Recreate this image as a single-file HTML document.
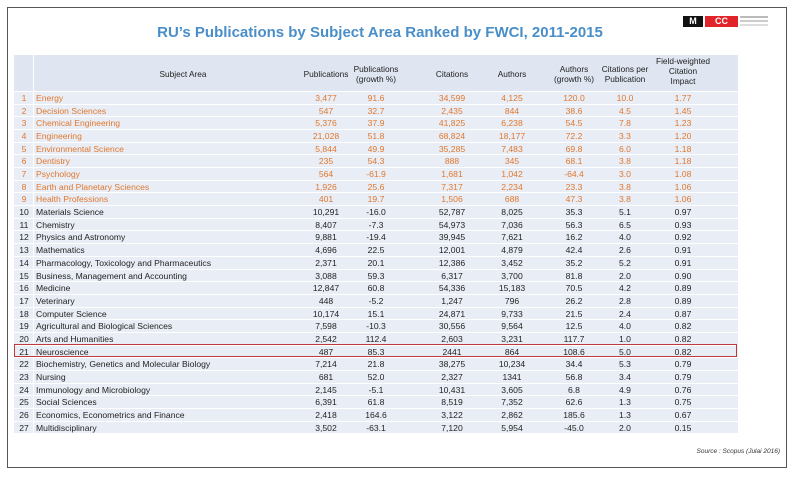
<!DOCTYPE html>
<html><head><meta charset="utf-8"><style>
body{margin:0;width:797px;height:479px;background:#fff;position:relative;overflow:hidden;font-family:"Liberation Sans",sans-serif}
#frame{position:absolute;left:7px;top:7px;width:780px;height:461px;border:1.5px solid #555;box-sizing:border-box}
#title{position:absolute;left:0;width:760px;top:24px;text-align:center;color:#4a8ec8;font-weight:bold;font-size:15px}
#tbl{position:absolute;left:14px;top:55px;width:724px;height:378px;background:#e9eef6}
.hdr{position:absolute;left:14px;top:55px;width:724px;height:36px;background:#dfe6f1}
.c{position:absolute;font-size:8.6px;white-space:nowrap;text-align:center;width:80px;line-height:12px}
.h{color:#222;font-size:8.3px;line-height:10px}
.sep{position:absolute;left:14px;width:724px;height:1px;background:#fff}
.vs{position:absolute;top:55px;width:1px;height:378px;background:#fff}
</style></head><body>
<div id="frame"></div>
<div id="title">RU’s Publications by Subject Area Ranked by FWCI, 2011-2015</div>
<div style="position:absolute;left:683px;top:16px;width:20px;height:11px;background:#111;color:#fff;font-size:9px;font-weight:bold;text-align:center;line-height:11px">M</div>
<div style="position:absolute;left:705px;top:16px;width:33px;height:11px;background:#e0242a;color:#fff;font-size:9px;font-weight:bold;text-align:center;line-height:11px">CC</div>
<div style="position:absolute;left:740px;top:16px;width:28px;height:2px;background:#bbb;box-shadow:0 4px 0 #ccc,0 8px 0 #ddd"></div>
<div id="tbl"></div><div class="hdr"></div>
<div id="rows"></div>
<div style="position:absolute;left:14px;top:344px;width:723px;height:13px;border:1.5px solid #c0393b;box-sizing:border-box"></div>
<div style="position:absolute;left:660px;top:448px;width:120px;text-align:right;font-size:6.5px;font-style:italic;color:#333">Source : Scopus (Julai 2016)</div>
<script>
var D=[
["Energy","3,477","91.6","34,599","4,125","120.0","10.0","1.77"],
["Decision Sciences","547","32.7","2,435","844","38.6","4.5","1.45"],
["Chemical Engineering","5,376","37.9","41,825","6,238","54.5","7.8","1.23"],
["Engineering","21,028","51.8","68,824","18,177","72.2","3.3","1.20"],
["Environmental Science","5,844","49.9","35,285","7,483","69.8","6.0","1.18"],
["Dentistry","235","54.3","888","345","68.1","3.8","1.18"],
["Psychology","564","-61.9","1,681","1,042","-64.4","3.0","1.08"],
["Earth and Planetary Sciences","1,926","25.6","7,317","2,234","23.3","3.8","1.06"],
["Health Professions","401","19.7","1,506","688","47.3","3.8","1.06"],
["Materials Science","10,291","-16.0","52,787","8,025","35.3","5.1","0.97"],
["Chemistry","8,407","-7.3","54,973","7,036","56.3","6.5","0.93"],
["Physics and Astronomy","9,881","-19.4","39,945","7,621","16.2","4.0","0.92"],
["Mathematics","4,696","22.5","12,001","4,879","42.4","2.6","0.91"],
["Pharmacology, Toxicology and Pharmaceutics","2,371","20.1","12,386","3,452","35.2","5.2","0.91"],
["Business, Management and Accounting","3,088","59.3","6,317","3,700","81.8","2.0","0.90"],
["Medicine","12,847","60.8","54,336","15,183","70.5","4.2","0.89"],
["Veterinary","448","-5.2","1,247","796","26.2","2.8","0.89"],
["Computer Science","10,174","15.1","24,871","9,733","21.5","2.4","0.87"],
["Agricultural and Biological Sciences","7,598","-10.3","30,556","9,564","12.5","4.0","0.82"],
["Arts and Humanities","2,542","112.4","2,603","3,231","117.7","1.0","0.82"],
["Neuroscience","487","85.3","2441","864","108.6","5.0","0.82"],
["Biochemistry, Genetics and Molecular Biology","7,214","21.8","38,275","10,234","34.4","5.3","0.79"],
["Nursing","681","52.0","2,327","1341","56.8","3.4","0.79"],
["Immunology and Microbiology","2,145","-5.1","10,431","3,605","6.8","4.9","0.76"],
["Social Sciences","6,391","61.8","8,519","7,352","62.6","1.3","0.75"],
["Economics, Econometrics and Finance","2,418","164.6","3,122","2,862","185.6","1.3","0.67"],
["Multidisciplinary","3,502","-63.1","7,120","5,954","-45.0","2.0","0.15"]];
var C=[326,376,452,512,574,625,683];
var H=[["Publications"],["Publications","(growth %)"],["Citations"],["Authors"],["Authors","(growth %)"],["Citations per","Publication"],["Field-weighted","Citation","Impact"]];
var h="";
[33].forEach(function(x){h+='<div class="vs" style="left:'+x+'px"></div>';});
h+='<div class="c h" style="left:143px;top:69px">Subject Area</div>';
H.forEach(function(a,i){var t=74-a.length*5;if(i==6)t=56;h+='<div class="c h" style="left:'+(C[i]-40)+'px;top:'+t+'px">'+a.join("<br>")+'</div>';});
D.forEach(function(r,i){var y=91+i*12.68;var col=i<9?"#e0772e":"#222";
h+='<div class="sep" style="top:'+Math.round(y)+'px"></div>';
h+='<div class="c" style="left:-16px;top:'+(y+1)+'px;color:'+col+'">'+(i+1)+'</div>';
h+='<div class="c" style="left:36px;text-align:left;width:260px;top:'+(y+1)+'px;color:'+col+'">'+r[0]+'</div>';
for(var j=1;j<8;j++)h+='<div class="c" style="left:'+(C[j-1]-40)+'px;top:'+(y+1)+'px;color:'+col+'">'+r[j]+'</div>';});
document.getElementById("rows").innerHTML=h;
</script>
</body></html>
